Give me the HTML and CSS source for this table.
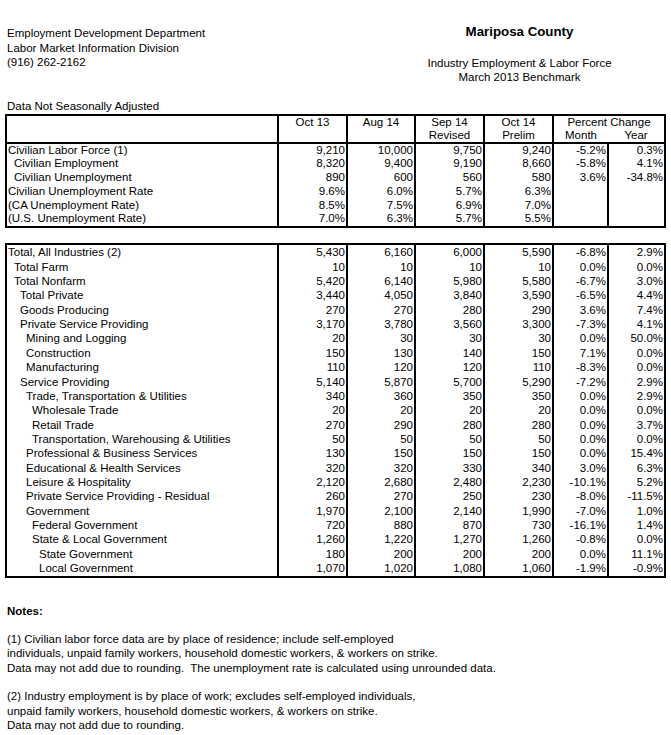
FILE: index.html
```html
<!DOCTYPE html>
<html>
<head>
<meta charset="utf-8">
<title>Mariposa County - Industry Employment &amp; Labor Force</title>
<link rel="stylesheet" href="styles.css">
</head>
<body>
<div class="top">
  <div class="org">
    <div>Employment Development Department</div>
    <div>Labor Market Information Division</div>
    <div>(916) 262-2162</div>
  </div>
  <div class="title">
    <h1>Mariposa County</h1>
    <p>Industry Employment &amp; Labor Force<br>March 2013 Benchmark</p>
  </div>
</div>
<div class="caption">Data Not Seasonally Adjusted</div>

<table class="data t1">
  <colgroup>
    <col class="c-label"><col class="c-n1"><col class="c-n2"><col class="c-n3"><col class="c-n4"><col class="c-m"><col class="c-y">
  </colgroup>
  <thead>
    <tr>
      <th rowspan="2"></th>
      <th rowspan="2">Oct 13</th>
      <th rowspan="2">Aug 14</th>
      <th>Sep 14</th>
      <th>Oct 14</th>
      <th colspan="2">Percent Change</th>
    </tr>
    <tr>
      <th>Revised</th>
      <th>Prelim</th>
      <th class="month">Month</th>
      <th>Year</th>
    </tr>
  </thead>
  <tbody>
    <tr><td class="l0">Civilian Labor Force (1)</td><td>9,210</td><td>10,000</td><td>9,750</td><td>9,240</td><td>-5.2%</td><td>0.3%</td></tr>
    <tr><td class="l1">Civilian Employment</td><td>8,320</td><td>9,400</td><td>9,190</td><td>8,660</td><td>-5.8%</td><td>4.1%</td></tr>
    <tr><td class="l1">Civilian Unemployment</td><td>890</td><td>600</td><td>560</td><td>580</td><td>3.6%</td><td>-34.8%</td></tr>
    <tr><td class="l0">Civilian Unemployment Rate</td><td>9.6%</td><td>6.0%</td><td>5.7%</td><td>6.3%</td><td></td><td></td></tr>
    <tr><td class="l0">(CA Unemployment Rate)</td><td>8.5%</td><td>7.5%</td><td>6.9%</td><td>7.0%</td><td></td><td></td></tr>
    <tr><td class="l0">(U.S. Unemployment Rate)</td><td>7.0%</td><td>6.3%</td><td>5.7%</td><td>5.5%</td><td></td><td></td></tr>
  </tbody>
</table>

<table class="data t2">
  <colgroup>
    <col class="c-label"><col class="c-n1"><col class="c-n2"><col class="c-n3"><col class="c-n4"><col class="c-m"><col class="c-y">
  </colgroup>
  <tbody>
    <tr><td class="l0">Total, All Industries (2)</td><td>5,430</td><td>6,160</td><td>6,000</td><td>5,590</td><td>-6.8%</td><td>2.9%</td></tr>
    <tr><td class="l1">Total Farm</td><td>10</td><td>10</td><td>10</td><td>10</td><td>0.0%</td><td>0.0%</td></tr>
    <tr><td class="l1">Total Nonfarm</td><td>5,420</td><td>6,140</td><td>5,980</td><td>5,580</td><td>-6.7%</td><td>3.0%</td></tr>
    <tr><td class="l2">Total Private</td><td>3,440</td><td>4,050</td><td>3,840</td><td>3,590</td><td>-6.5%</td><td>4.4%</td></tr>
    <tr><td class="l2">Goods Producing</td><td>270</td><td>270</td><td>280</td><td>290</td><td>3.6%</td><td>7.4%</td></tr>
    <tr><td class="l2">Private Service Providing</td><td>3,170</td><td>3,780</td><td>3,560</td><td>3,300</td><td>-7.3%</td><td>4.1%</td></tr>
    <tr><td class="l3">Mining and Logging</td><td>20</td><td>30</td><td>30</td><td>30</td><td>0.0%</td><td>50.0%</td></tr>
    <tr><td class="l3">Construction</td><td>150</td><td>130</td><td>140</td><td>150</td><td>7.1%</td><td>0.0%</td></tr>
    <tr><td class="l3">Manufacturing</td><td>110</td><td>120</td><td>120</td><td>110</td><td>-8.3%</td><td>0.0%</td></tr>
    <tr><td class="l2">Service Providing</td><td>5,140</td><td>5,870</td><td>5,700</td><td>5,290</td><td>-7.2%</td><td>2.9%</td></tr>
    <tr><td class="l3">Trade, Transportation &amp; Utilities</td><td>340</td><td>360</td><td>350</td><td>350</td><td>0.0%</td><td>2.9%</td></tr>
    <tr><td class="l4">Wholesale Trade</td><td>20</td><td>20</td><td>20</td><td>20</td><td>0.0%</td><td>0.0%</td></tr>
    <tr><td class="l4">Retail Trade</td><td>270</td><td>290</td><td>280</td><td>280</td><td>0.0%</td><td>3.7%</td></tr>
    <tr><td class="l4">Transportation, Warehousing &amp; Utilities</td><td>50</td><td>50</td><td>50</td><td>50</td><td>0.0%</td><td>0.0%</td></tr>
    <tr><td class="l3">Professional &amp; Business Services</td><td>130</td><td>150</td><td>150</td><td>150</td><td>0.0%</td><td>15.4%</td></tr>
    <tr><td class="l3">Educational &amp; Health Services</td><td>320</td><td>320</td><td>330</td><td>340</td><td>3.0%</td><td>6.3%</td></tr>
    <tr><td class="l3">Leisure &amp; Hospitality</td><td>2,120</td><td>2,680</td><td>2,480</td><td>2,230</td><td>-10.1%</td><td>5.2%</td></tr>
    <tr><td class="l3">Private Service Providing - Residual</td><td>260</td><td>270</td><td>250</td><td>230</td><td>-8.0%</td><td>-11.5%</td></tr>
    <tr><td class="l3">Government</td><td>1,970</td><td>2,100</td><td>2,140</td><td>1,990</td><td>-7.0%</td><td>1.0%</td></tr>
    <tr><td class="l4">Federal Government</td><td>720</td><td>880</td><td>870</td><td>730</td><td>-16.1%</td><td>1.4%</td></tr>
    <tr><td class="l4">State &amp; Local Government</td><td>1,260</td><td>1,220</td><td>1,270</td><td>1,260</td><td>-0.8%</td><td>0.0%</td></tr>
    <tr><td class="l5">State Government</td><td>180</td><td>200</td><td>200</td><td>200</td><td>0.0%</td><td>11.1%</td></tr>
    <tr><td class="l5">Local Government</td><td>1,070</td><td>1,020</td><td>1,080</td><td>1,060</td><td>-1.9%</td><td>-0.9%</td></tr>
  </tbody>
</table>

<div class="notes">
  <p class="notes-title">Notes:</p>
  <p>(1) Civilian labor force data are by place of residence; include self-employed<br>individuals, unpaid family workers, household domestic workers, &amp; workers on strike.<br>Data may not add due to rounding.&nbsp; The unemployment rate is calculated using unrounded data.</p>
  <p>(2) Industry employment is by place of work; excludes self-employed individuals,<br>unpaid family workers, household domestic workers, &amp; workers on strike.<br>Data may not add due to rounding.</p>
</div>
</body>
</html>
```
FILE: styles.css
```css
html, body {
  background: #fff;
}
body {
  margin: 0;
  font-family: "Liberation Sans", Arial, sans-serif;
  font-size: 11.5px;
  color: #000;
}

.top {
  display: flex;
  align-items: flex-start;
  padding: 26px 6px 0 7px;
}
.org {
  flex: 1;
  line-height: 14.5px;
}
.title {
  width: 291px;
  text-align: center;
  margin-top: -2px;
}
.title h1 {
  margin: 0;
  font-size: 13.3px;
  line-height: 15px;
  font-weight: bold;
}
.title p {
  margin: 17px 0 0;
  line-height: 14px;
}

.caption {
  margin-top: 15px;
  padding-left: 7px;
  line-height: 14.5px;
}

.data {
  margin-left: 5px;
  border-collapse: collapse;
  table-layout: fixed;
  width: 660px;
  border: 2px solid #000;
}
.c-label { width: 272px; }
.c-n1 { width: 69px; }
.c-n2 { width: 68px; }
.c-n3 { width: 69px; }
.c-n4 { width: 69px; }
.c-m { width: 55px; }
.c-y { width: 57px; }

.data th,
.data td {
  padding: 0 1px 0 0;
  border-right: 2px solid #000;
  white-space: nowrap;
}
.data th {
  font-weight: normal;
  text-align: center;
  vertical-align: top;
  line-height: 13px;
  padding: 0;
}
.data th.month {
  border-right: none;
}
.data thead {
  border-bottom: 2px solid #000;
}
.data td {
  text-align: right;
}
.t1 td {
  line-height: 13.8px;
}
.t2 {
  margin-top: 15px;
}
.t2 td {
  line-height: 14.36px;
}

.data td.l0 { text-align: left; padding-left: 1px; }
.data td.l1 { text-align: left; padding-left: 7px; }
.data td.l2 { text-align: left; padding-left: 13px; }
.data td.l3 { text-align: left; padding-left: 19px; }
.data td.l4 { text-align: left; padding-left: 25px; }
.data td.l5 { text-align: left; padding-left: 32px; }

.notes {
  padding-left: 7px;
  margin-top: 26px;
  line-height: 14.3px;
}
.notes p {
  margin: 0 0 14.3px;
}
.notes-title {
  font-weight: bold;
}
```
